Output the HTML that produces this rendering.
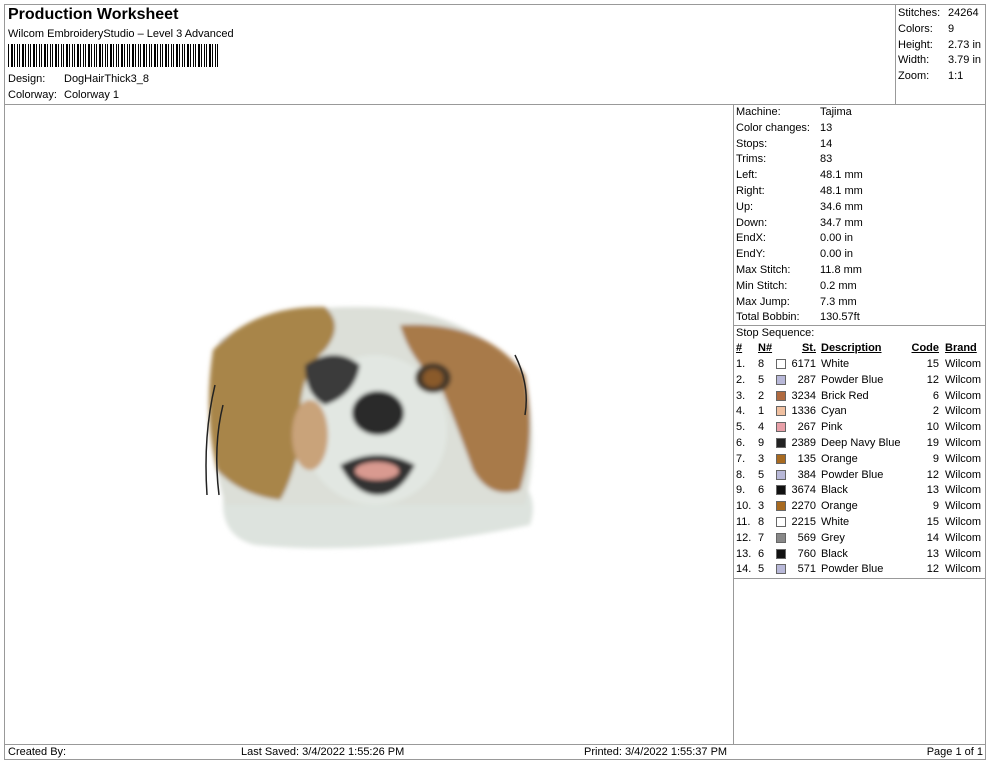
<!DOCTYPE html>
<html><head><meta charset="utf-8"><style>
body{margin:0;width:990px;height:762px;background:#fff;font-family:"Liberation Sans",Arial,sans-serif;font-size:11px;color:#000;position:relative;overflow:hidden}
.a{position:absolute;white-space:nowrap}
.ln{position:absolute;background:#999}
.bc{position:absolute;left:8px;top:44px;width:210px;height:23px;background:repeating-linear-gradient(90deg,#000 0 1px,#fff 1px 3px,#000 3px 5px,#fff 5px 6px,#000 6px 7px,#fff 7px 9px,#000 9px 10px,#fff 10px 11px)}
.sw{display:inline-block;width:10px;height:10px;border:1px solid #666;box-sizing:border-box}
.u{text-decoration:underline;font-weight:bold}
</style></head><body>
<div class="ln" style="left:4px;top:4px;width:982px;height:1px"></div>
<div class="ln" style="left:4px;top:4px;width:1px;height:756px"></div>
<div class="ln" style="left:985px;top:4px;width:1px;height:756px"></div>
<div class="ln" style="left:4px;top:104px;width:982px;height:1px"></div>
<div class="ln" style="left:895px;top:4px;width:1px;height:100px"></div>
<div class="ln" style="left:733px;top:104px;width:1px;height:640px"></div>
<div class="ln" style="left:733px;top:325px;width:253px;height:1px"></div>
<div class="ln" style="left:733px;top:578px;width:253px;height:1px"></div>
<div class="ln" style="left:4px;top:744px;width:982px;height:1px"></div>
<div class="ln" style="left:4px;top:759px;width:982px;height:1px"></div>

<div class="a" style="left:8px;top:6px;font-size:16px;font-weight:bold">Production Worksheet</div>
<div class="a" style="left:8px;top:28px">Wilcom EmbroideryStudio – Level 3 Advanced</div>
<div class="bc"></div>
<div class="a" style="left:8px;top:73px">Design:</div><div class="a" style="left:64px;top:73px">DogHairThick3_8</div>
<div class="a" style="left:8px;top:89px">Colorway:</div><div class="a" style="left:64px;top:89px">Colorway 1</div>

<div class="a" style="left:898px;top:6px;line-height:15.8px">Stitches:<br>Colors:<br>Height:<br>Width:<br>Zoom:</div>
<div class="a" style="left:948px;top:6px;line-height:15.8px">24264<br>9<br>2.73 in<br>3.79 in<br>1:1</div>

<div class="a" style="left:736px;top:105px;line-height:15.8px">Machine:<br>Color changes:<br>Stops:<br>Trims:<br>Left:<br>Right:<br>Up:<br>Down:<br>EndX:<br>EndY:<br>Max Stitch:<br>Min Stitch:<br>Max Jump:<br>Total Bobbin:<br>Stop Sequence:</div>
<div class="a" style="left:820px;top:105px;line-height:15.8px">Tajima<br>13<br>14<br>83<br>48.1 mm<br>48.1 mm<br>34.6 mm<br>34.7 mm<br>0.00 in<br>0.00 in<br>11.8 mm<br>0.2 mm<br>7.3 mm<br>130.57ft</div>

<div class="a" style="left:736px;top:342px;width:250px;height:15px">
<span class="a u" style="left:0">#</span><span class="a u" style="left:22px">N#</span><span class="a u" style="right:170px">St.</span><span class="a u" style="left:85px">Description</span><span class="a u" style="right:47px">Code</span><span class="a u" style="left:209px">Brand</span></div>
<div id="t" class="a" style="left:736px;top:358px;width:250px"></div>
<div class="a" style="left:8px;top:746px">Created By:</div>
<div class="a" style="left:241px;top:746px">Last Saved: 3/4/2022 1:55:26 PM</div>
<div class="a" style="left:584px;top:746px">Printed: 3/4/2022 1:55:37 PM</div>
<div class="a" style="right:7px;top:746px">Page 1 of 1</div>

<svg class="a" style="left:195px;top:295px" width="350" height="260" viewBox="0 0 350 260">
<defs><filter id="b"><feGaussianBlur stdDeviation="2"/></filter></defs>
<g filter="url(#b)">
<path d="M30 190 Q20 240 60 250 Q180 262 335 230 Q345 200 320 180 L40 180Z" fill="#dde3de"/>
<path d="M25 45 Q80 10 170 12 Q270 12 330 80 Q345 150 330 210 L30 210 Q5 120 25 45Z" fill="#dcdfd8"/>
<path d="M18 55 Q60 10 130 12 Q150 30 130 55 Q100 80 105 150 Q95 190 85 205 Q45 200 22 175 Q8 120 18 55Z" fill="#a88548"/>
<path d="M205 30 Q290 25 330 80 Q342 140 325 195 Q295 205 278 175 Q258 120 245 90 Q215 65 205 30Z" fill="#a87a48"/>
<ellipse cx="180" cy="135" rx="72" ry="75" fill="#e2e7e2"/>
<path d="M110 70 Q140 50 165 70 Q160 100 130 110 Q110 100 110 70Z" fill="#3a3a3a"/>
<ellipse cx="238" cy="83" rx="18" ry="15" fill="#4a3a2a"/>
<ellipse cx="238" cy="83" rx="10" ry="9" fill="#8a5a2a"/>
<ellipse cx="183" cy="118" rx="26" ry="22" fill="#2a2a2a"/>
<path d="M145 170 Q183 150 220 170 Q205 200 183 200 Q160 200 145 170Z" fill="#303030"/>
<ellipse cx="182" cy="176" rx="22" ry="9" fill="#d99a90"/>
<ellipse cx="115" cy="140" rx="18" ry="35" fill="#c9a37a"/>
</g>
<g stroke="#222" stroke-width="1.5" fill="none"><path d="M20 90 Q8 140 12 200"/><path d="M28 110 Q18 150 24 200"/><path d="M320 60 Q335 90 330 120"/></g>
</svg>
<script>
var d=[["1.","8","#fff","6171","White","15"],["2.","5","#b8b8d8","287","Powder Blue","12"],["3.","2","#b06a40","3234","Brick Red","6"],["4.","1","#f0c0a0","1336","Cyan","2"],["5.","4","#e8a0a8","267","Pink","10"],["6.","9","#222","2389","Deep Navy Blue","19"],["7.","3","#a86a20","135","Orange","9"],["8.","5","#b8b8d8","384","Powder Blue","12"],["9.","6","#111","3674","Black","13"],["10.","3","#a86a20","2270","Orange","9"],["11.","8","#fff","2215","White","15"],["12.","7","#888","569","Grey","14"],["13.","6","#111","760","Black","13"],["14.","5","#b8b8d8","571","Powder Blue","12"]];
var h="";d.forEach(function(r,i){h+='<div style="position:absolute;top:'+(i*15.8)+'px;width:250px;height:15px"><span class="a" style="left:0">'+r[0]+'</span><span class="a" style="left:22px">'+r[1]+'</span><span class="a sw" style="left:40px;top:1px;background:'+r[2]+'"></span><span class="a" style="right:170px">'+r[3]+'</span><span class="a" style="left:85px">'+r[4]+'</span><span class="a" style="right:47px">'+r[5]+'</span><span class="a" style="left:209px">Wilcom</span></div>'});
document.getElementById("t").innerHTML=h;
</script>
</body></html>
